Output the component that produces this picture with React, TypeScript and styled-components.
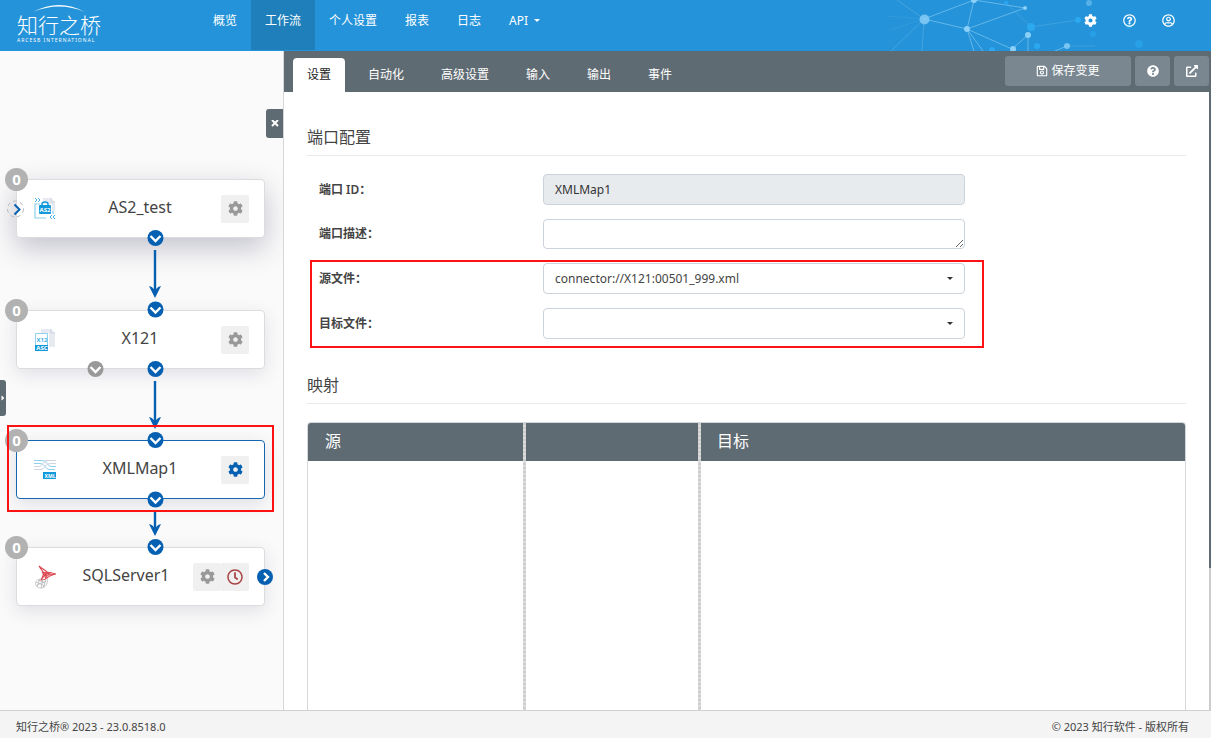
import React from 'react';
import styled, { createGlobalStyle, css } from 'styled-components';
import {
  FaCog,
  FaRegQuestionCircle,
  FaRegUserCircle,
  FaQuestionCircle,
  FaRegSave,
  FaExternalLinkAlt,
  FaCaretRight,
  FaRegClock,
} from 'react-icons/fa';

const GlobalStyle = createGlobalStyle`
  *, *::before, *::after { box-sizing: border-box; }
  body {
    margin: 0;
    color: #444;
    background: #fff;
    font-family: "Noto Sans", "Noto Sans CJK SC", sans-serif;
    font-size: 12px;
    line-height: 18px;
  }
  button, input, select, textarea { font: inherit; color: inherit; }
  a { color: inherit; text-decoration: none; }
`;

const slate = '#5f6b73';
const blue = '#0660b2';

const Page = styled.div`
  display: flex;
  flex-direction: column;
  height: 100vh;
  overflow: hidden;
`;

/* ---------- top bar ---------- */

const TopBar = styled.header`
  position: relative;
  display: flex;
  flex: none;
  height: 51px;
  padding-left: 17px;
  background: #2493d9;
  color: #fff;
`;

const Network = styled.svg`
  position: absolute;
  top: 0;
  right: 0;
`;

const Brand = styled.a`
  display: flex;
  flex-direction: column;
  width: 182px;
  padding-top: 5px;
`;

const Arc = styled.svg`
  display: block;
  flex: none;
  margin-left: 16px;
`;

const BrandName = styled.span`
  font-family: "Noto Sans CJK SC", sans-serif;
  font-size: 21px;
  font-weight: 300;
  line-height: 24px;
`;

const BrandSub = styled.span`
  padding-top: 1px;
  font-size: 5px;
  font-weight: 400;
  line-height: 6px;
  letter-spacing: 1px;
  white-space: nowrap;
`;

const Nav = styled.nav`
  display: flex;
  flex: 1;
`;

const NavLink = styled.a<{ $active?: boolean }>`
  display: flex;
  align-items: flex-start;
  height: 50px;
  padding: 12px 14px;
  background: ${(p) => (p.$active ? '#1e7fba' : 'transparent')};
`;

const Caret = styled.span`
  width: 0;
  height: 0;
  margin: 7px 0 0 6px;
  border: 3px solid transparent;
  border-top-color: currentColor;
  border-bottom: 0;
`;

const Tools = styled.div`
  position: relative;
  display: flex;
  align-items: flex-start;
  gap: 26px;
  padding: 14px 36px 0 0;
`;

const IconButton = styled.button`
  display: flex;
  padding: 0;
  border: 0;
  background: none;
  color: #fff;
`;

/* ---------- workspace ---------- */

const Workspace = styled.div`
  display: flex;
  flex: 1;
  min-height: 0;
`;

const Canvas = styled.section`
  position: relative;
  flex: none;
  width: 284px;
  overflow: hidden;
  border-right: 1px solid #d5d7d9;
  background: #fafafa;
`;

const Toggle = styled.button<{ $side: 'left' | 'right' }>`
  position: absolute;
  display: flex;
  align-items: center;
  justify-content: center;
  padding: 0;
  border: 0;
  background: ${slate};
  color: #fff;
  ${(p) =>
    p.$side === 'right'
      ? css`
          top: 58px;
          right: 0;
          width: 17px;
          height: 29px;
          border-radius: 3px 0 0 3px;
        `
      : css`
          top: 329px;
          left: 0;
          width: 6px;
          height: 36px;
          justify-content: flex-start;
          border-radius: 0 3px 3px 0;
          z-index: 3;
        `}
`;

const NodeCard = styled.article<{ $y: number; $selected?: boolean; $lifted?: boolean }>`
  position: absolute;
  top: ${(p) => p.$y}px;
  left: 16px;
  display: flex;
  align-items: center;
  width: 249px;
  height: 59px;
  padding: 0 15px 0 17px;
  border: 1px solid ${(p) => (p.$selected ? '#1667b0' : '#dcdcde')};
  border-radius: 4px;
  background: #fff;
  box-shadow: ${(p) =>
    p.$lifted ? '0 10px 28px rgba(50, 50, 90, 0.28)' : '0 5px 18px rgba(50, 50, 90, 0.13)'};
`;

const NodeName = styled.h3`
  flex: 1;
  margin: 0;
  padding: 0 0 4px 3px;
  font-size: 16px;
  font-weight: 400;
  line-height: 20px;
  text-align: center;
`;

const NodeActions = styled.div`
  display: flex;
`;

const NodeAction = styled.button<{ $tone: string }>`
  display: flex;
  align-items: center;
  justify-content: center;
  width: 28px;
  height: 28px;
  padding: 0;
  border: 0;
  border-radius: 2px;
  background: #f0f0f0;
  color: ${(p) => p.$tone};
`;

const Count = styled.span`
  position: absolute;
  top: -12px;
  left: -12px;
  width: 23px;
  height: 23px;
  border-radius: 50%;
  background: #b2b2b2;
  color: #fff;
  font-family: "Open Sans", sans-serif;
  font-size: 15px;
  font-weight: 700;
  line-height: 23px;
  text-align: center;
`;

const Wires = styled.svg`
  position: absolute;
  top: 0;
  left: 0;
  z-index: 2;
  pointer-events: none;
`;

const Highlight = styled.div`
  position: absolute;
  border: 2px solid #fc1212;
  pointer-events: none;
  z-index: 4;
`;

const NodeHighlight = styled(Highlight)`
  top: 374px;
  left: 7px;
  width: 267px;
  height: 87px;
`;

/* ---------- settings panel ---------- */

const Panel = styled.main`
  display: flex;
  flex: 1;
  flex-direction: column;
  min-width: 0;
`;

const TabBar = styled.div`
  display: flex;
  flex: none;
  align-items: flex-end;
  height: 41px;
  padding: 0 2px 0 9px;
  background: ${slate};
`;

const Tabs = styled.div`
  display: flex;
  flex: 1;
  gap: 9px;
`;

const Tab = styled.button<{ $active?: boolean }>`
  height: 34px;
  padding: 0 14px;
  border: 0;
  border-radius: 4px 4px 0 0;
  background: ${(p) => (p.$active ? '#fff' : 'transparent')};
  color: ${(p) => (p.$active ? '#222' : '#fff')};
`;

const Actions = styled.div`
  display: flex;
  align-self: flex-start;
  gap: 4px;
  padding-top: 5px;
`;

const Action = styled.button<{ $wide?: boolean }>`
  display: flex;
  align-items: center;
  justify-content: center;
  gap: 3px;
  width: ${(p) => (p.$wide ? 126 : 35)}px;
  height: 30px;
  padding: 0;
  border: 0;
  border-radius: 3px;
  background: #7a8791;
  color: #fff;
`;

const Scroll = styled.div`
  display: flex;
  flex: 1;
  flex-direction: column;
  min-height: 0;
  padding: 32px 23px 0;
  overflow: hidden;
  border-right: 2px solid ${slate};
  border-image: linear-gradient(${slate} 77%, #ccc 77%) 1;
`;

const SectionTitle = styled.h2`
  flex: none;
  margin: 0;
  padding: 0 0 4px;
  border-bottom: 1px solid #e9eaeb;
  font-size: 16px;
  font-weight: 400;
  line-height: 27px;
`;

const Form = styled.form`
  position: relative;
  display: flex;
  flex: none;
  flex-direction: column;
  gap: 14px;
  padding: 18px 12px 33px;
`;

const Field = styled.div`
  display: flex;
  align-items: center;
`;

const Label = styled.label`
  width: 224px;
  font-weight: 600;
`;

const control = css`
  width: 422px;
  height: 31px;
  padding: 0 11px;
  border: 1px solid #cdd3da;
  border-radius: 4px;
  background: #fff;
  outline: 0;
`;

const Input = styled.input`
  ${control}
  background: #e8ebee;
  color: #333;
`;

const TextArea = styled.textarea`
  ${control}
  display: block;
  height: 30px;
`;

const SelectWrap = styled.div`
  position: relative;
  display: flex;
  align-items: center;
`;

const Select = styled.select`
  ${control}
  appearance: none;
`;

const SelectCaret = styled(Caret)`
  position: absolute;
  right: 12px;
  margin: 0;
  color: #333;
`;

const FormHighlight = styled(Highlight)`
  top: 104px;
  left: 3px;
  width: 674px;
  height: 88px;
`;

const Mapping = styled.div`
  display: grid;
  flex: 1;
  grid-template-columns: 215px 3px 172px 3px 1fr;
  grid-template-rows: 38px 1fr;
  margin-top: 18px;
  border: 1px solid #d5d8da;
  border-bottom: 0;
  border-radius: 4px 4px 0 0;
  overflow: hidden;
`;

const MapHead = styled.h3<{ $inset?: number }>`
  margin: 0;
  padding: 0 ${(p) => p.$inset ?? 17}px;
  background: ${slate};
  color: #fff;
  font-size: 16px;
  font-weight: 400;
  line-height: 37px;
`;

const Splitter = styled.div`
  grid-row: span 2;
  background: repeating-linear-gradient(#cdcdcd 0 2px, #dcdcdc 2px 4px);
`;

const Footer = styled.footer`
  display: flex;
  flex: none;
  justify-content: space-between;
  height: 28px;
  padding: 7px 22px 0 16px;
  border-top: 1px solid #d0d0d0;
  background: #f4f4f4;
  font-size: 11px;
`;

/* ---------- drawings ---------- */

const As2Icon = () => (
  <svg width="22" height="24" viewBox="0 0 22 24" fill="none">
    <path d="M9 1h8l4 4v9h-3V7H9z" fill="#e7eaf0" />
    <path d="M17 1v4h4" stroke="#ccd2dc" />
    <path d="M6 7H1v14h11M19 14v3" stroke="#8fd0ef" strokeWidth="1.200" />
    <path d="M1 1l2 2-2 2M4 1l2 2-2 2M18 18l-2 2 2 2M21 18l-2 2 2 2" stroke="#45b1e4" />
    <path d="M8 9V7q0-2 3-2t3 2v2" stroke="#1299da" strokeWidth="1.500" />
    <rect x="5" y="8" width="12" height="9" rx="1" fill="#1299da" />
    <text x="11" y="15" fontSize="6" fontWeight="700" fill="#fff" textAnchor="middle">AS2</text>
  </svg>
);

const X12Icon = () => (
  <svg width="22" height="24" viewBox="0 0 22 24" fill="none">
    <path d="M7 1h10l4 4v14h-6V5H7z" fill="#e7eaf0" />
    <path d="M17 1v4h4" stroke="#ccd2dc" />
    <path d="M1.500 17V5.500h12V17" stroke="#8fd0ef" fill="#fff" />
    <rect x="1" y="17" width="13" height="6" fill="#1299da" />
    <text x="8" y="14" fontSize="6" fontWeight="700" fill="#45b1e4" textAnchor="middle">X12</text>
    <text x="8" y="22" fontSize="6" fontWeight="700" fill="#fff" textAnchor="middle">ASC</text>
  </svg>
);

const XmlMapIcon = () => (
  <svg width="22" height="24" viewBox="0 0 22 24" fill="none">
    <path d="M0 2.500h8q3 0 5 3t4 3h5M0 5.500h6q3 0 5 3t4 3h6M0 11.500h8" stroke="#8fd0ef" />
    <path d="M22 2.500h-8q-3 0-5 3t-4 3H0M22 5.500h-6q-3 0-5 3t-4 3H0M11 2.500h6" stroke="#ccd5e0" />
    <rect x="9" y="14" width="13" height="7" fill="#1299da" />
    <text x="16" y="20" fontSize="5" fontWeight="700" fill="#fff" textAnchor="middle">XML</text>
  </svg>
);

const SqlServerIcon = () => (
  <svg width="22" height="24" viewBox="0 0 22 24" fill="none">
    <path
      d="M5 1c2 2 6 4 8 6 3 1 6 1 9 2-4 1-7 2-9 4-1 1-4 2-6 2 2-3 3-5 2-8-1-2-3-4-4-6zm2 14 6-8M8 7l5 6M9 11l12-2M6 3l5 6 5-1-5 5M9 8l4-1M8 13l6-5"
      stroke="#dd4b52"
      strokeWidth="1.100"
    />
    <path
      d="M13 13c1 4 0 7-3 9-3 2-7 1-8-2-2-3 2-6 5-6M2 17l9 4M4 15l7 3M6 14l-3 8M9 14l-2 9M12 15l-3 8M3 20l9-4"
      stroke="#b9b9bd"
      strokeWidth="0.8"
    />
  </svg>
);

const Port = ({ x, y, tone = blue, right }: { x: number; y: number; tone?: string; right?: boolean }) => (
  <g transform={`translate(${x} ${y})`}>
    <circle r="8" fill={tone} />
    <path d={right ? 'M-1-4L3 0L-1 4' : 'M-5-2L0 3L5-2'} fill="none" stroke="#fff" strokeWidth="2.400" />
  </g>
);

const Arrow = ({ from, to }: { from: number; to: number }) => (
  <g>
    <path d={`M155 ${from}V${to - 6}`} stroke={blue} strokeWidth="2.400" />
    <path d={`M149 ${to - 12}Q154 ${to - 11} 155 ${to - 6}Q156 ${to - 11} 161 ${to - 12}L155 ${to}Z`} fill={blue} />
  </g>
);

const nodes = [
  { name: 'AS2_test', y: 128, icon: <As2Icon />, lifted: true },
  { name: 'X121', y: 259, icon: <X12Icon /> },
  { name: 'XMLMap1', y: 389, icon: <XmlMapIcon />, selected: true },
  { name: 'SQLServer1', y: 496, icon: <SqlServerIcon />, scheduled: true },
];

const Flow = () => (
  <Canvas>
    {nodes.map((n) => (
      <NodeCard key={n.name} $y={n.y} $selected={n.selected} $lifted={n.lifted}>
        {n.icon}
        <NodeName>{n.name}</NodeName>
        <NodeActions>
          <NodeAction $tone={n.selected ? blue : '#999'} aria-label={`${n.name} settings`}>
            <FaCog size={15} />
          </NodeAction>
          {n.scheduled && (
            <NodeAction $tone="#a94442" aria-label="schedule">
              <FaRegClock size={16} />
            </NodeAction>
          )}
        </NodeActions>
        <Count>0</Count>
      </NodeCard>
    ))}
    <Wires width="283" height="620" viewBox="0 0 283 620">
      <Arrow from={199} to={247} />
      <Arrow from={330} to={378} />
      <Arrow from={461} to={485} />
      <circle cx="15.500" cy="158" r="8" fill="none" stroke="#bbb" strokeDasharray="4 3" />
      <path d="M14.500 153.500L19.500 158.500L14.500 163.500" fill="none" stroke={blue} strokeWidth="2" />
      <Port x={155.5} y={187} />
      <Port x={155.5} y={258.5} />
      <Port x={95.5} y={318} tone="#999" />
      <Port x={155.5} y={318} />
      <Port x={155.5} y={389} />
      <Port x={155.5} y={448.5} />
      <Port x={155.5} y={496} />
      <Port x={265} y={526} right />
    </Wires>
    <NodeHighlight />
    <Toggle $side="right" aria-label="close">
      <svg width="8" height="8" viewBox="0 0 8 8">
        <path d="M1 0L7 6M7 0L1 6" stroke="#fff" strokeWidth="2" />
      </svg>
    </Toggle>
    <Toggle $side="left" aria-label="expand">
      <FaCaretRight size={8} />
    </Toggle>
  </Canvas>
);

const NetworkArt = () => (
  <Network width="361" height="51" viewBox="0 0 361 51">
    <g stroke="#8fd0f3" strokeWidth="1" opacity="0.6" fill="none">
      <path d="M74 19L124 0L175 8L117 29L74 19M124 0L117 29L162 49L178 35V51M117 29L124 51M117 29L133 51M205 51L217 46" />
      <path d="M74 19L47 0M74 19L72 51M74 19L41 51" opacity="0.5" />
      <path d="M74 19L36 16M74 19L40 30" opacity="0.2" />
      <path d="M181 27L228 20M156 3L181 27M217 46H245" opacity="0.4" />
    </g>
    <g fill="#8ad0f8">
      <circle cx="74.500" cy="19.500" r="5" opacity="0.8" />
      <circle cx="117" cy="29" r="3" />
      <circle cx="124" cy="0" r="3" />
      <circle cx="175" cy="8" r="2" />
      <circle cx="178" cy="35" r="3" />
      <circle cx="163" cy="49" r="3" />
      <circle cx="217" cy="46" r="3" opacity="0.8" />
      <circle cx="239" cy="3" r="3" opacity="0.5" />
    </g>
    <g fill="#2ba8f0">
      <circle cx="181" cy="27" r="4" />
      <circle cx="187" cy="46" r="3" />
      <circle cx="156" cy="3" r="2" />
      <circle cx="142" cy="50" r="3" />
      <circle cx="228" cy="20" r="3" />
      <circle cx="243" cy="34" r="3" opacity="0.6" />
      <circle cx="289" cy="44" r="4" opacity="0.6" />
      <circle cx="279" cy="26" r="3" opacity="0.6" />
    </g>
  </Network>
);

const tabs = ['设置', '自动化', '高级设置', '输入', '输出', '事件'];
const links = ['概览', '工作流', '个人设置', '报表', '日志'];

export default function App() {
  return (
    <Page>
      <GlobalStyle />
      <TopBar>
        <NetworkArt />
        <Brand href="#">
          <Arc width="52" height="7" viewBox="0 0 52 7">
            <path d="M0 7Q26-7 52 7Q26-4 0 7Z" fill="#fff" />
          </Arc>
          <BrandName>知行之桥</BrandName>
          <BrandSub>ARCESB INTERNATIONAL</BrandSub>
        </Brand>
        <Nav>
          {links.map((l) => (
            <NavLink key={l} href="#" $active={l === '工作流'}>
              {l}
            </NavLink>
          ))}
          <NavLink href="#">
            API
            <Caret />
          </NavLink>
        </Nav>
        <Tools>
          <IconButton aria-label="settings"><FaCog size={13} /></IconButton>
          <IconButton aria-label="help"><FaRegQuestionCircle size={13} /></IconButton>
          <IconButton aria-label="account"><FaRegUserCircle size={13} /></IconButton>
        </Tools>
      </TopBar>
      <Workspace>
        <Flow />
        <Panel>
          <TabBar>
            <Tabs role="tablist">
              {tabs.map((t, i) => (
                <Tab key={t} role="tab" aria-selected={i === 0} $active={i === 0}>
                  {t}
                </Tab>
              ))}
            </Tabs>
            <Actions>
              <Action $wide><FaRegSave size={12} />保存变更</Action>
              <Action aria-label="help"><FaQuestionCircle size={12} /></Action>
              <Action aria-label="open"><FaExternalLinkAlt size={12} /></Action>
            </Actions>
          </TabBar>
          <Scroll>
            <SectionTitle>端口配置</SectionTitle>
            <Form>
              <Field>
                <Label htmlFor="port-id">端口 ID：</Label>
                <Input id="port-id" value="XMLMap1" readOnly />
              </Field>
              <Field>
                <Label htmlFor="port-desc">端口描述：</Label>
                <TextArea id="port-desc" />
              </Field>
              <Field>
                <Label htmlFor="source">源文件：</Label>
                <SelectWrap>
                  <Select id="source">
                    <option>connector://X121:00501_999.xml</option>
                  </Select>
                  <SelectCaret />
                </SelectWrap>
              </Field>
              <Field>
                <Label htmlFor="target">目标文件：</Label>
                <SelectWrap>
                  <Select id="target">
                    <option></option>
                  </Select>
                  <SelectCaret />
                </SelectWrap>
              </Field>
              <FormHighlight />
            </Form>
            <SectionTitle>映射</SectionTitle>
            <Mapping>
              <MapHead>源</MapHead>
              <Splitter />
              <MapHead />
              <Splitter />
              <MapHead $inset={16}>目标</MapHead>
            </Mapping>
          </Scroll>
        </Panel>
      </Workspace>
      <Footer>
        <span>知行之桥® 2023 - 23.0.8518.0</span>
        <span>© 2023 知行软件 - 版权所有</span>
      </Footer>
    </Page>
  );
}
